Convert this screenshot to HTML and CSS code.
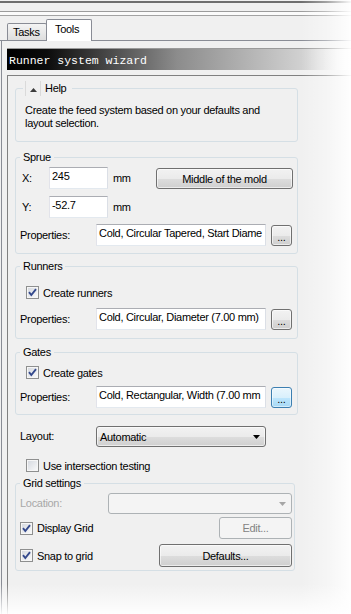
FILE: index.html
```html
<!DOCTYPE html>
<html lang="en">
<head>
  <meta charset="UTF-8" />
  <meta name="viewport" content="width=device-width, initial-scale=1.0" />
  <title>Runner system wizard</title>
  <link rel="stylesheet" href="styles.css">
</head>
<body>
  <div class="chrome"></div>
  <div class="tabs">
    <div class="tab">Tasks</div>
    <div class="tab active">Tools</div>
  </div>

  <div class="page">
    <div class="title">Runner system wizard</div>

    <div class="panel">
      <fieldset class="group help">
        <legend><span class="toggle"><svg width="7" height="4" viewBox="0 0 7 4"><path d="M0 4 L3.5 0 L7 4 Z" fill="#3c3c3c"/></svg></span><span>Help</span></legend>
        <p>Create the feed system based on your defaults and<br>layout selection.</p>
      </fieldset>

      <fieldset class="group sprue">
        <legend>Sprue</legend>
        <div class="row coord first">
          <span class="axis">X:</span>
          <div class="field num">245</div>
          <span class="unit">mm</span>
          <button class="btn mold">Middle of the mold</button>
        </div>
        <div class="row coord">
          <span class="axis">Y:</span>
          <div class="field num">-52.7</div>
          <span class="unit">mm</span>
        </div>
        <div class="row props">
          <span class="label">Properties:</span>
          <div class="field prop">Cold, Circular Tapered, Start Diame</div>
          <button class="btn more">...</button>
        </div>
      </fieldset>

      <fieldset class="group runners">
        <legend>Runners</legend>
        <div class="row check-row">
          <span class="check on"><svg width="11" height="11" viewBox="0 0 11 11"><path d="M2 5.2 L4.3 8 L9 2.2" fill="none" stroke="#34498c" stroke-width="1.9"/></svg></span>
          <span class="check-label">Create runners</span>
        </div>
        <div class="row props">
          <span class="label">Properties:</span>
          <div class="field prop">Cold, Circular, Diameter (7.00 mm)</div>
          <button class="btn more">...</button>
        </div>
      </fieldset>

      <fieldset class="group gates">
        <legend>Gates</legend>
        <div class="row check-row">
          <span class="check on"><svg width="11" height="11" viewBox="0 0 11 11"><path d="M2 5.2 L4.3 8 L9 2.2" fill="none" stroke="#34498c" stroke-width="1.9"/></svg></span>
          <span class="check-label">Create gates</span>
        </div>
        <div class="row props">
          <span class="label">Properties:</span>
          <div class="field prop">Cold, Rectangular, Width (7.00 mm</div>
          <button class="btn more focus">...</button>
        </div>
      </fieldset>

      <div class="row layout">
        <span class="label">Layout:</span>
        <div class="select">
          <span>Automatic</span>
          <svg width="7" height="4" viewBox="0 0 7 4"><path d="M0 0 L7 0 L3.5 4 Z" fill="#000"/></svg>
        </div>
      </div>

      <div class="row check-row loose">
        <span class="check"></span>
        <span class="check-label">Use intersection testing</span>
      </div>

      <fieldset class="group grid">
        <legend>Grid settings</legend>
        <div class="row location">
          <span class="label disabled">Location:</span>
          <div class="select off">
            <span></span>
            <svg width="7" height="4" viewBox="0 0 7 4"><path d="M0 0 L7 0 L3.5 4 Z" fill="#a6a6a6"/></svg>
          </div>
        </div>
        <div class="row grid-row display">
          <span class="check on"><svg width="11" height="11" viewBox="0 0 11 11"><path d="M2 5.2 L4.3 8 L9 2.2" fill="none" stroke="#34498c" stroke-width="1.9"/></svg></span>
          <span class="check-label">Display Grid</span>
          <button class="btn edit" disabled>Edit...</button>
        </div>
        <div class="row grid-row snap">
          <span class="check on"><svg width="11" height="11" viewBox="0 0 11 11"><path d="M2 5.2 L4.3 8 L9 2.2" fill="none" stroke="#34498c" stroke-width="1.9"/></svg></span>
          <span class="check-label">Snap to grid</span>
          <button class="btn defaults">Defaults...</button>
        </div>
      </fieldset>
    </div>
  </div>

  <div class="fade-right"></div>
  <div class="fade-bottom"></div>
</body>
</html>
```

FILE: styles.css
```css
* {
  box-sizing: border-box;
}
html, body {
  margin: 0;
}
body {
  position: relative;
  width: 351px;
  height: 614px;
  overflow: hidden;
  background: #f0f0f0;
  font-family: "Liberation Sans", Arial, sans-serif;
  font-size: 11px;
  letter-spacing: -0.3px;
  color: #000;
}

/* window chrome */
.chrome {
  height: 16px;
  background: linear-gradient(to bottom,
    #f0f0f0 0 1px, #6e6e6e 1px 3px, #f0f0f0 3px 11px,
    #9c9c9c 11px 12px, #fbfbfb 12px 15px, #a3a3a3 15px 16px);
}
.tabs {
  display: flex;
  align-items: flex-end;
  height: 25px;
  padding-left: 7px;
  border-bottom: 1px solid #898c95;
}
.tab {
  width: 40px;
  height: 17px;
  padding-left: 5px;
  line-height: 16px;
  border: 1px solid #898c95;
  border-bottom: 0;
  border-radius: 2px 2px 0 0;
  background: linear-gradient(#f4f4f4, #dedede);
}
.tab.active {
  width: 46px;
  height: 22px;
  margin-left: -1px;
  margin-bottom: -1px;
  padding-left: 8px;
  line-height: 18px;
  background: #fff;
}

.page {
  margin-left: 1px;
  padding: 7px 0 0 5px;
  border-left: 1px solid #898c95;
  height: 600px;
}
.title {
  height: 22px;
  padding: 3px 0 0 2px;
  line-height: 17px;
  border-top: 1px solid #9a9a9a;
  background: linear-gradient(to right, #000 0, #0c0c0c 40px, #8c8c8c 170px, #d4d4d4 300px, #fff 345px);
  font-family: "Liberation Mono", "Courier New", monospace;
  font-size: 11.5px;
  letter-spacing: 0;
  color: #fff;
}

.panel {
  margin-top: 5px;
  padding: 5px 0 0 7px;
  border-top: 1px solid #808080;
  border-left: 1px solid #808080;
  height: 560px;
}

/* group boxes */
.group {
  width: 283px;
  min-width: 0;
  margin: 0;
  padding: 0 4px;
  border: 1px solid #d5dfe5;
  border-radius: 3px;
}
.group legend {
  padding: 0 3px;
  line-height: 13px;
}
.help legend {
  display: flex;
  align-items: center;
  height: 15px;
  margin-left: 3px;
  padding: 0 6px 0 2px;
  line-height: 15px;
}
.toggle {
  display: flex;
  justify-content: center;
  align-items: center;
  width: 16px;
  height: 15px;
  padding-top: 2px;
  margin-right: 4px;
  border-left: 1px solid #dadada;
  border-right: 1px solid #dadada;
}
.help {
  padding-bottom: 11px;
}
.help p {
  margin: 8px 0 0;
  padding-left: 5px;
  line-height: 13px;
}
.sprue {
  margin-top: 9px;
  padding-bottom: 7px;
}
.runners {
  margin-top: 6px;
  padding-bottom: 8px;
}
.gates {
  margin-top: 7px;
  padding-bottom: 6px;
}
.grid {
  width: 280px;
  margin-top: 4px;
  padding: 0 2px 3px 4px;
}

/* rows */
.row {
  display: flex;
  align-items: center;
}
.label {
  width: 76px;
  line-height: 13px;
}
.coord {
  height: 22px;
  margin-top: 7px;
  padding-left: 2px;
}
.coord.first {
  margin-top: 3px;
}
.axis {
  width: 27px;
}
.unit {
  margin-left: 5px;
}
.props {
  height: 22px;
  margin-top: 6px;
  align-items: flex-end;
}
.props .label {
  align-self: center;
}
.runners .props {
  margin-top: 8px;
}
.check-row {
  height: 15px;
  margin-top: 12px;
  padding-left: 6px;
}
.gates .check-row {
  margin-top: 6px;
}
.check-row.loose {
  margin-top: 11px;
  padding-left: 11px;
}
.layout {
  height: 21px;
  margin-top: 11px;
  padding-left: 5px;
}
.location {
  height: 21px;
  margin-top: 3px;
}
.location .label {
  width: 88px;
}
.disabled {
  color: #a8a8a8;
}
.grid-row.display {
  height: 22px;
  margin-top: 3px;
}
.grid-row.snap {
  height: 23px;
  margin-top: 5px;
}

/* controls */
.field {
  height: 22px;
  padding: 0 2px;
  line-height: 16px;
  white-space: nowrap;
  overflow: hidden;
  background: #fff;
  border: 1px solid;
  border-color: #abadb3 #dbdfe6 #e3e9ef #e2e3ea;
}
.field.num {
  width: 59px;
}
.field.prop {
  width: 170px;
}
.btn {
  padding: 0;
  font-family: inherit;
  font-size: 11px;
  letter-spacing: inherit;
  color: #000;
  border: 1px solid #707070;
  border-radius: 3px;
  background: linear-gradient(#f2f2f2 0, #ebebeb 50%, #dddddd 51%, #cfcfcf 100%);
  box-shadow: inset 0 0 0 1px rgba(255, 255, 255, 0.6);
}
.btn.mold {
  width: 137px;
  height: 21px;
  margin-left: auto;
  align-self: flex-end;
}
.btn.more {
  width: 21px;
  height: 21px;
  margin-left: 5px;
  padding-top: 3px;
  line-height: 10px;
}
.btn.focus {
  border-color: #3c7fb1;
  background: linear-gradient(#eaf6fd 0, #d9f0fc 50%, #bee6fd 51%, #a7d9f5 100%);
  box-shadow: inset 0 0 0 1px rgba(255, 255, 255, 0.5);
}
.btn.edit {
  width: 73px;
  height: 22px;
  margin-left: auto;
  color: #838383;
  border-color: #adb2b5;
  background: #f4f4f4;
  box-shadow: none;
}
.btn.defaults {
  width: 133px;
  height: 23px;
  margin-left: auto;
}

.select {
  display: flex;
  align-items: center;
  justify-content: space-between;
  width: 170px;
  height: 21px;
  padding: 0 5px 0 3px;
  border: 1px solid #707070;
  border-radius: 3px;
  background: linear-gradient(#f2f2f2 0, #ebebeb 50%, #dddddd 51%, #cfcfcf 100%);
  box-shadow: inset 0 0 0 1px rgba(255, 255, 255, 0.6);
}
.select.off {
  width: 184px;
  border-color: #adb2b5;
  background: #f4f4f4;
  box-shadow: none;
}

.check {
  display: flex;
  align-items: center;
  justify-content: center;
  width: 13px;
  height: 13px;
  border: 1px solid #8e8f8f;
  background: linear-gradient(135deg, #d3d7de, #fbfbfb);
  box-shadow: inset 0 0 0 1px #f6f6f6;
}
.check-label {
  margin-left: 4px;
}

/* soft edge of the screenshot */
.fade-right {
  position: absolute;
  top: 0;
  right: 0;
  width: 50px;
  height: 100%;
  background: linear-gradient(to right, rgba(255, 255, 255, 0), rgba(255, 255, 255, 0.35) 50%, rgba(255, 255, 255, 0.95));
}
.fade-bottom {
  position: absolute;
  left: 0;
  bottom: 0;
  width: 100%;
  height: 30px;
  background: linear-gradient(rgba(255, 255, 255, 0), rgba(255, 255, 255, 0.92));
}
```
